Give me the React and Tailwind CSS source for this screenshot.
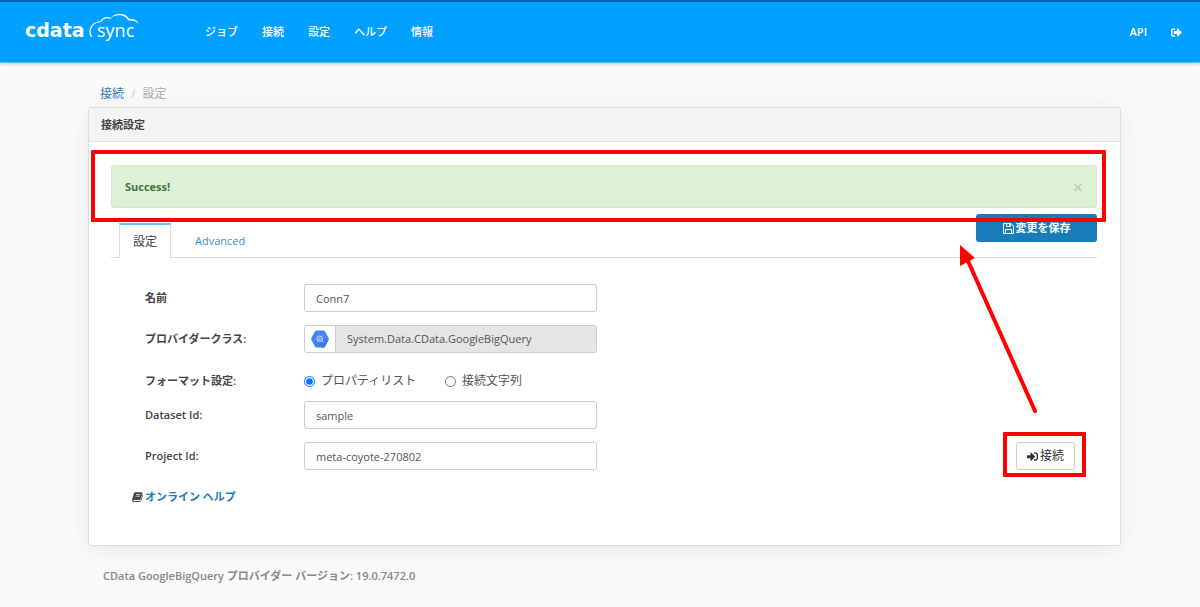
import React, { useState } from 'react';
import { FaSignInAlt, FaSignOutAlt } from 'react-icons/fa';

const navItems = ['ジョブ', '接続', '設定', 'ヘルプ', '情報'];

const Logo = () => (
    <svg width="116" height="44" viewBox="0 -4 116 44" role="img" aria-label="cdata sync" fill="white">
        <text x="-1" y="23" fontSize="19" fontWeight="700" fontFamily="DejaVu Sans">cdata</text>
        <text x="71" y="23" fontSize="18" fontFamily="Open Sans">sync</text>
        <path d="M65.500 23C62 17 65 8 75 7.500" fill="none" stroke="white" strokeWidth="1.200" />
        <path d="M75 7.500C77 4 81 3 85 4.500" fill="none" stroke="white" strokeWidth="1.200" />
        <path d="M84 4.500C89 -2 99 -2 103.500 5C108 4.500 111 6 113 10C110 7 107 6 102.500 6.500C98 0 90 0 84 4.500z" />
    </svg>
);

const BigQueryIcon = () => (
    <svg width="18" height="18" viewBox="0 0 18 18" aria-hidden="true">
        <path d="M5.2 0.5h7.6q.7 0 1 .6l3.8 7q.4.9 0 1.8l-3.8 7q-.3.6-1 .6H5.2q-.7 0-1-.6l-3.8-7q-.4-.9 0-1.8l3.8-7q.3-.6 1-.6z" fill="#4285f4" />
        <path d="M12 7l5 4-3.200 6q-.3.5-1 .5h-2.5L6.500 12z" fill="#3a78e0" />
        <circle cx="8.800" cy="8.800" r="2.900" fill="none" stroke="#dce8fd" strokeWidth="0.900" />
        <path d="M7.700 8.800v1.300M8.800 7.600v2.700M9.900 8.500v1.600M11 11l1.500 1.500" stroke="#dce8fd" strokeWidth="0.800" />
    </svg>
);

const SaveIcon = () => (
    <svg width="11" height="11" viewBox="0 0 11 11" fill="none" stroke="white" strokeWidth="1" aria-hidden="true">
        <path d="M.5.5h7.500l2.500 2.500v7.500H.5z" />
        <path d="M3.500.5v3h4v-3M2.500 10.500v-4h6v4" />
        <path d="M6 1h1v2H6z" fill="white" stroke="none" />
    </svg>
);

const BookIcon = () => (
    <svg width="11" height="10" viewBox="0 0 11 10" aria-hidden="true">
        <path d="M3.300 0.300h6.200q1 0 .8 1L8.600 7q-.3 1-1.200 1H1.800q-.7 0-.6.500.1.500.8.500h5.800q.6 0 .8-.600L10.300 2.500q.8.200.5 1.200L9.200 8.800Q8.800 10 7.600 10H1.800Q0 10 0 8.200q0-.5.300-1.200L2 1.300Q2.300.300 3.300.300z" fill="#444" />
        <path d="M4 2.500h4.300M3.500 4.200h4.300" stroke="white" strokeWidth="0.700" />
    </svg>
);

const FormRow = ({ label, id, children }) => (
    <div className="flex items-center">
        <label htmlFor={id} className="w-[159px] font-semibold">{label}</label>
        {children}
    </div>
);

const inputClass = 'h-7 w-[293px] rounded-[3px] border border-[#ccc] bg-white px-[11px] text-[11px] text-[#555]';

const App = () => {
    const [name, setName] = useState('Conn7');
    const [dataset, setDataset] = useState('sample');
    const [project, setProject] = useState('meta-coyote-270802');
    const [format, setFormat] = useState('list');

    return (
        <div className="min-h-screen bg-[#fafafa] font-['Open_Sans','Noto_Sans_CJK_JP',sans-serif] text-[11px] leading-4 text-[#444]">
            {/* Header */}
            <header className="flex h-[63px] items-center border-t-2 border-b border-t-[#0062b8] border-b-[#4db5f5] bg-[#00a0ff] pr-[18px] pl-[26px] text-white shadow-[0_1px_4px_rgba(0,0,0,0.2)]">
                <Logo />
                <nav className="ml-[63px] flex gap-6 font-medium">
                    {navItems.map(item => <a key={item} href="#">{item}</a>)}
                </nav>
                <div className="ml-auto flex items-center gap-6 font-semibold">
                    <a href="#">API</a>
                    <a href="#" aria-label="Logout"><FaSignOutAlt size={11} /></a>
                </div>
            </header>

            <main className="pt-[22px] pr-[79px] pl-[88px]">
                <nav className="flex gap-[7px] pt-px pl-3 text-[12px] text-[#aaa]">
                    <a href="#" className="text-[#337ab7]">接続</a>
                    <span className="text-[#ccc]">/</span>
                    <span>設定</span>
                </nav>

                {/* Panel */}
                <section className="mt-[5px] rounded-[3px] border border-[#ddd] bg-white shadow-[0_4px_24px_rgba(0,0,0,0.07)]">
                    <h1 className="border-b border-[#e4e4e4] bg-[#f4f4f4] px-3 pt-[9px] pb-2 text-[11px] font-semibold">接続設定</h1>

                    <div className="pt-[23px] pr-[23px] pb-[39px] pl-[22px]">
                        {/* Alert */}
                        <div className="relative z-10">
                            <div role="alert" className="flex h-[43px] items-center justify-between rounded-[3px] border border-[#d6e9c6] bg-[#dff0d8] px-[13px] text-[#3c763d]">
                                <strong className="font-bold">Success!</strong>
                                <button type="button" aria-label="Close" className="text-[18px] text-[#b3cbae]">×</button>
                            </div>
                            <div className="pointer-events-none absolute -top-[15px] -right-[9px] -bottom-[14px] -left-[20px] rounded-[1px] border-4 border-[#ff0000]" />
                        </div>

                        {/* Tabs */}
                        <div className="mt-[6px] flex items-start justify-between border-b border-[#ddd] pl-2">
                            <div className="mt-[9px] -mb-px flex">
                                <button type="button" className="h-[35px] border-x border-t-2 border-x-[#ddd] border-t-[#66bfff] bg-linear-to-b from-[#f0f9ff] to-white to-30% px-[13px] text-[12px]">設定</button>
                                <button type="button" className="h-[35px] px-6 text-[#428bca]">Advanced</button>
                            </div>
                            <button type="button" className="flex h-7 w-[121px] items-center justify-center gap-[2px] rounded-[3px] bg-[#187bba] text-[11px] font-semibold text-white">
                                <SaveIcon />変更を保存
                            </button>
                        </div>

                        {/* Form */}
                        <form className="relative mt-[26px] pl-[34px]" onSubmit={e => e.preventDefault()}>
                            <div className="flex flex-col gap-[13px]">
                                <FormRow label="名前" id="name">
                                    <input id="name" className={inputClass} value={name} onChange={e => setName(e.target.value)} />
                                </FormRow>
                                <FormRow label="プロバイダークラス:" id="provider">
                                    <div className="flex h-7 w-[293px] overflow-hidden rounded-[3px] border border-[#ccc]">
                                        <span className="flex w-[31px] items-center justify-center border-r border-[#ccc]"><BigQueryIcon /></span>
                                        <input id="provider" readOnly className="min-w-0 flex-1 bg-[#e5e5e5] px-[11px] text-[11px] text-[#555]" value="System.Data.CData.GoogleBigQuery" />
                                    </div>
                                </FormRow>
                                <div role="radiogroup" aria-labelledby="format" className="flex h-[22px] items-center pt-2">
                                    <span id="format" className="w-[159px] font-semibold">フォーマット設定:</span>
                                    <label className="flex w-[141px] items-center gap-[6px] text-[12px] text-[#555]">
                                        <input type="radio" name="format" className="h-[11px] w-[11px]" checked={format === 'list'} onChange={() => setFormat('list')} />
                                        プロパティリスト
                                    </label>
                                    <label className="flex items-center gap-[6px] text-[12px] text-[#555]">
                                        <input type="radio" name="format" className="h-[11px] w-[11px]" checked={format === 'string'} onChange={() => setFormat('string')} />
                                        接続文字列
                                    </label>
                                </div>
                                <FormRow label="Dataset Id:" id="dataset">
                                    <input id="dataset" className={inputClass} value={dataset} onChange={e => setDataset(e.target.value)} />
                                </FormRow>
                                <div className="flex items-center justify-between pr-[22px]">
                                    <FormRow label="Project Id:" id="project">
                                        <input id="project" className={inputClass} value={project} onChange={e => setProject(e.target.value)} />
                                    </FormRow>
                                    <div className="relative">
                                        <button type="button" className="flex h-7 w-[59px] items-center justify-center gap-[2px] rounded-[3px] border border-[#ccc] bg-white text-[12px] text-[#333]">
                                            <FaSignInAlt size={11} />接続
                                        </button>
                                        <div className="pointer-events-none absolute -top-[10px] -right-[11px] -bottom-[7px] -left-[13px] rounded-[1px] border-4 border-[#ff0000]" />
                                    </div>
                                </div>
                            </div>
                            <a href="#" className="mt-[19px] -ml-[13px] inline-flex items-center gap-[2px] font-semibold text-[#187bba]">
                                <BookIcon />オンライン ヘルプ
                            </a>

                            {/* Arrow from the connect button up to save */}
                            <svg className="pointer-events-none absolute -top-[39px] right-[57px]" width="80" height="174" viewBox="0 0 80 174" aria-hidden="true">
                                <path d="M8 16L75 166" stroke="#ff0000" strokeWidth="4" strokeLinecap="round" />
                                <path d="M0 0L15 13L0 21z" fill="#ff0000" />
                            </svg>
                        </form>
                    </div>
                </section>

                <footer className="px-[15px] pt-[22px] pb-4 font-semibold text-[#888]">
                    CData GoogleBigQuery プロバイダー バージョン: 19.0.7472.0
                </footer>
            </main>
        </div>
    );
};

export default App;
